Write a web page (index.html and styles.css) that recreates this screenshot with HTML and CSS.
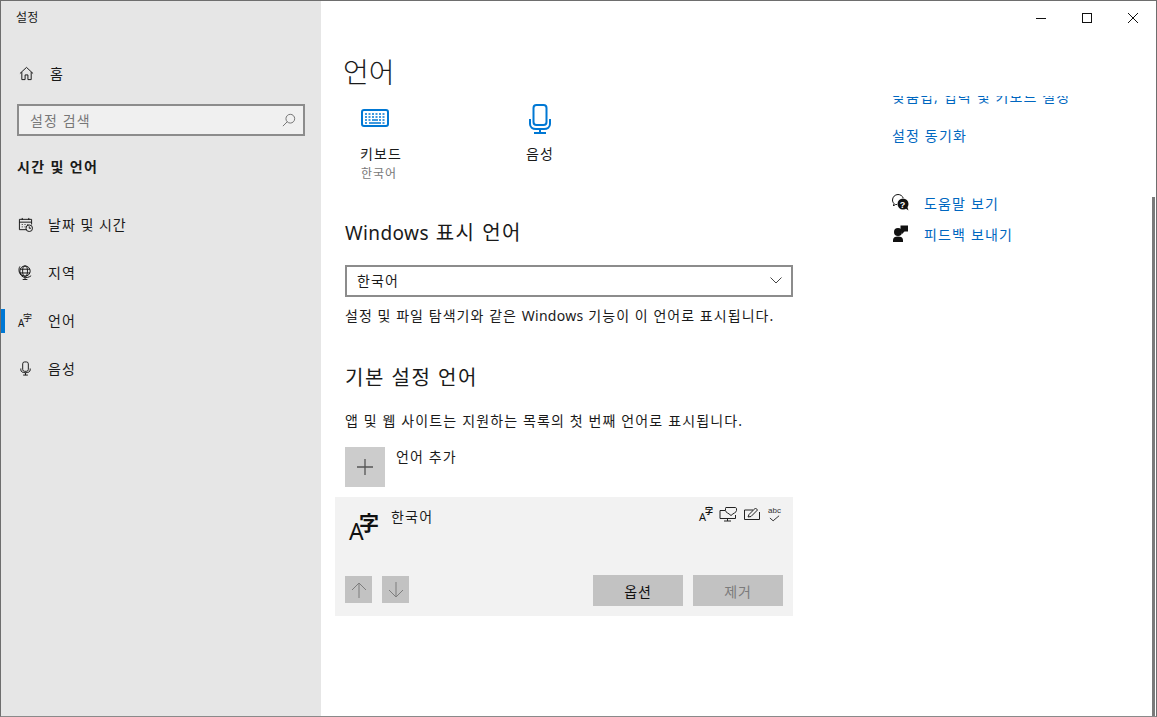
FILE: index.html
```html
<!DOCTYPE html>
<html lang="ko">
<head>
<meta charset="utf-8">
<title>설정</title>
<link rel="stylesheet" href="styles.css">
</head>
<body>
<div class="window">
  <aside class="sidebar">
    <div class="app-title">설정</div>
    <a class="home">
      <svg class="nav-icon" viewBox="0 0 16 16"><path d="M1 8 8 1.500 15 8M3 6.500V14.500H6.500V9.500H9.500V14.500H13V6.500"/></svg>
      <span>홈</span>
    </a>
    <div class="search"><span>설정 검색</span>
      <svg class="search-icon" viewBox="0 0 16 16"><circle cx="9.500" cy="6.500" r="5"/><path d="M6 10 1 15"/></svg>
    </div>
    <div class="section">시간 및 언어</div>
    <nav class="nav">
      <a class="nav-item">
        <svg class="nav-icon" viewBox="0 0 16 16"><path d="M9 13.500H1.500V2.500H14.500V8M1.500 5.500H14.500M4.500 1V3M11.500 1V3M4 8h1M7 8h1M10 8h1M4 10.500h1M7 10.500h1"/><circle cx="12" cy="12" r="3.500"/><path d="M12 10v2h2"/></svg>
        <span>날짜 및 시간</span>
      </a>
      <a class="nav-item">
        <svg class="nav-icon" viewBox="0 0 16 16"><circle cx="7.500" cy="6.500" r="5.500"/><ellipse cx="7.500" cy="6.500" rx="2.600" ry="5.500"/><path d="M2.200 4.500H12.800M2.200 8.500H12.800M2 1.500C0 5 1 10.500 6 13 9 14 12 13 14 11.500M7.500 13.500V15.500M5 15.500H10"/></svg>
        <span>지역</span>
      </a>
      <a class="nav-item active">
        <span class="lang-glyph lang-nav"><i class="g-a">A</i><i class="g-z">字</i></span>
        <span>언어</span>
      </a>
      <a class="nav-item">
        <svg class="nav-icon" viewBox="0 0 16 16"><rect x="5" y="1" width="6" height="10" rx="2"/><path d="M3 8V9.500C3 11.500 5 12.500 8 12.500S13 11.500 13 9.500V8M8 12.500V15M5.500 15H10.500"/></svg>
        <span>음성</span>
      </a>
    </nav>
  </aside>

  <main class="main">
    <header class="topbar">
      <svg class="win-btn" viewBox="0 0 46 32"><path d="M18 17.500H28"/></svg>
      <svg class="win-btn" viewBox="0 0 46 32"><rect x="18.500" y="12.500" width="9" height="9"/></svg>
      <svg class="win-btn" viewBox="0 0 46 32"><path d="M18 12 28 22M28 12 18 22"/></svg>
    </header>
    <h1 class="page-title">언어</h1>
    <div class="scroller">
      <div class="content">
        <div class="tiles">
          <div class="tile tile-kb">
            <svg class="kb" viewBox="0 0 28 18"><rect x="1" y="1" width="26" height="16" rx="2"/><path class="dots" d="M4 5h2M7.500 5h2M11 5h2M14.500 5h2M18 5h2M21.500 5h2M4 8h2M7.500 8h2M11 8h2M14.500 8h2M18 8h2M21.500 8h2M4 11h2M7.500 11h2M18 11h2M21.500 11h2M4 14h2M8 14h12M21.500 14h2M11 11h6"/></svg>
            <div class="tile-name">키보드</div>
            <div class="tile-sub">한국어</div>
          </div>
          <div class="tile tile-mic">
            <svg class="mic" viewBox="0 0 22 30"><rect x="4.500" y="1" width="13" height="20" rx="3"/><path d="M1 15V20C1 23 3.500 25 7 25H15C18.500 25 21 23 21 20V15M11 25V29M5 29H17"/></svg>
            <div class="tile-name">음성</div>
          </div>
        </div>

        <h2 class="heading first"><span class="latin">Windows</span> 표시 언어</h2>
        <div class="select"><span>한국어</span>
          <svg class="chev" viewBox="0 0 12 7"><path d="M.5.5 6 6 11.500.5"/></svg>
        </div>
        <p class="desc d1">설정 및 파일 탐색기와 같은 <span class="latin">Windows</span> 기능이 이 언어로 표시됩니다.</p>

        <h2 class="heading second">기본 설정 언어</h2>
        <p class="desc d2">앱 및 웹 사이트는 지원하는 목록의 첫 번째 언어로 표시됩니다.</p>
        <div class="add">
          <div class="plus"><svg viewBox="0 0 16 16"><path d="M8 0V16M0 8H16"/></svg></div>
          <span>언어 추가</span>
        </div>

        <div class="card">
          <div class="card-top">
            <span class="lang-glyph lang-big"><i class="g-a">A</i><i class="g-z">字</i></span>
            <span class="card-name">한국어</span>
            <div class="features">
              <span class="lang-glyph lang-small"><i class="g-a">A</i><i class="g-z">字</i></span>
              <svg class="feat" viewBox="0 0 18 15"><path d="M6 3.500H1V11.500H16.500V8M8.500 11.500V14M5 14H12"/><path d="M7 .5H16C17 .5 17.500 1 17.500 2V3.500C17.500 5.500 14.500 6 12 8.500 9.500 6 6.500 5.500 6.500 3.500V2C6.500 1 6.500 .5 7 .5Z"/></svg>
              <svg class="feat feat-pen" viewBox="0 0 16 14"><path d="M9 3H.5V12.500H15.500V5M4 10 5 7.500 11.500 1 13.500 3 7 9.500Z"/></svg>
              <span class="abc"><i>abc</i><svg viewBox="0 0 12 7"><path d="M1 3 4.500 6 11 .5"/></svg></span>
            </div>
          </div>
          <div class="card-bottom">
            <button class="arrow"><svg viewBox="0 0 16 16"><path d="M8 16V1M1 8 8 1 15 8"/></svg></button>
            <button class="arrow"><svg viewBox="0 0 16 16"><path d="M8 0V15M1 8 8 15 15 8"/></svg></button>
            <button class="btn options">옵션</button>
            <button class="btn remove">제거</button>
          </div>
        </div>
      </div>

      <aside class="links">
        <a class="link clipped">맞춤법, 입력 및 키보드 설정</a>
        <a class="link sync">설정 동기화</a>
        <a class="help">
          <svg class="help-icon" viewBox="0 0 17 17"><path class="line" d="M5 10.500C3.500 10.500 3 10.500 2.500 11L1.500 12 2 9.500C1 8.500.5 7.500.5 6 .5 3 3 .5 6 .5 8.500.5 10.500 2 11.200 4"/><circle cx="11" cy="10" r="5.500" class="solid"/><path class="solid" d="M13 14 16.500 16.500 15 12Z"/><text x="11" y="13.500" class="q">?</text></svg>
          <span>도움말 보기</span>
        </a>
        <a class="help">
          <svg class="help-icon" viewBox="0 0 17 17"><circle cx="6" cy="7" r="4" class="solid"/><path class="solid" d="M1 17V15C1 12.500 3 11.500 6 11.500S11 12.500 11 15V17Z"/><path class="solid" d="M8.500 .5H16V6.500H12.500L10 9V6.500H8.500Z"/></svg>
          <span>피드백 보내기</span>
        </a>
      </aside>
    </div>
    <div class="scrollbar"></div>
  </main>
</div>
</body>
</html>
```

FILE: styles.css
```css
* { box-sizing: border-box; }
html, body { margin: 0; height: 100%; overflow: hidden; }
body { font-family: "Noto Sans", "Noto Sans CJK KR", sans-serif; font-size: 14px; color: #1a1a1a; background: #fff; }
i { font-style: normal; }

.window { display: flex; width: 1157px; height: 717px; border: 1px solid #6e6e6e; border-bottom-color: #8a8a8a; overflow: hidden; }

/* Sidebar */
.sidebar { width: 320px; flex: none; background: #e6e6e6; padding-left: 16px; }
.app-title { font-size: 12px; line-height: 16px; margin-top: 9px; margin-left: -1px; letter-spacing: .3px; }
.home { display: flex; align-items: center; height: 24px; margin: 35px 0 0 2px; }
.home span { margin-left: 16px; }
.nav-icon { width: 15px; height: 15px; fill: none; stroke: #111; stroke-width: 1; flex: none; }
.search { display: flex; align-items: center; justify-content: space-between; width: 288px; height: 32px; margin: 19px 0 0 0; padding: 0 7px 0 11px; border: 2px solid #8c8c8c; background: #f0f0f0; color: #777; letter-spacing: 1.1px; }
.search-icon { width: 14px; height: 14px; fill: none; stroke: #666; stroke-width: 1; }
.section { font-weight: 700; font-size: 14px; line-height: 20px; margin-top: 21px; letter-spacing: 1.35px; }
.nav { margin: 24px 0 0 -16px; }
.nav-item { display: flex; align-items: center; height: 48px; padding: 0 0 2px 17px; letter-spacing: 1px; position: relative; }
.nav-item > span:last-child { margin-left: 15px; }
.nav-item > .lang-nav + span:last-child { margin-left: 14px; }
.nav-item.active::before { content: ""; position: absolute; left: 0; top: 12px; width: 4px; height: 24px; background: #0078d4; }

.lang-glyph { position: relative; display: block; flex: none; color: #111; }
.lang-glyph i { position: absolute; line-height: 1; font-family: "Noto Sans", sans-serif; }
.lang-glyph .g-z { font-family: "Noto Sans CJK SC", sans-serif; }
.lang-nav { width: 16px; height: 15px; }
.lang-nav .g-a { font-size: 10px; left: 0; bottom: 0; }
.lang-nav .g-z { font-size: 9px; right: 1px; top: 0; }
.lang-big { width: 30px; height: 30px; }
.lang-big .g-a { font-size: 23px; left: 0; bottom: 0; }
.lang-big .g-z { font-size: 20px; font-weight: 700; right: 0; top: 0; }
.lang-small { width: 14px; height: 15px; }
.lang-small .g-a { font-size: 11px; left: 0; bottom: 0; }
.lang-small .g-z { font-size: 8px; right: 0; top: 0; font-weight: 700; }

/* Main */
.main { flex: 1; min-width: 0; position: relative; }
.topbar { display: flex; justify-content: flex-end; height: 32px; }
.win-btn { width: 46px; height: 32px; fill: none; stroke: #111; stroke-width: 1; }
.page-title { margin: 0; height: 63px; padding: 18px 0 0 22px; font-size: 28px; line-height: 42px; font-weight: 300; }
.scroller { display: flex; height: 620px; overflow: hidden; }
.content { width: 472px; flex: none; padding-left: 14px; }

.tiles { display: flex; padding-left: 25px; margin-top: 8px; }
.tile { display: flex; flex-direction: column; letter-spacing: 1.1px; }
.tile-kb { width: 166px; }
.kb { width: 28px; height: 18px; margin: 5px 0 7px 1px; fill: none; stroke: #0078d4; stroke-width: 2; }
.kb .dots { stroke-width: 1.500; }
.mic { width: 22px; height: 30px; margin-left: 3px; fill: none; stroke: #0078d4; stroke-width: 2; }
.tile-name { line-height: 20px; margin-top: 10px; }
.tile-sub { font-size: 12px; line-height: 18px; color: #777; margin: 1px 0 0 1px; letter-spacing: 1px; }

.heading { margin: 0; font-size: 20px; line-height: 28px; font-weight: 400; padding-left: 10px; letter-spacing: 1.5px; }
.heading .latin { font-size: 19px; letter-spacing: .4px; }
.desc .latin { letter-spacing: .3px; }
.heading.first { margin-top: 36px; }
.heading.second { margin-top: 38px; }
.select { display: flex; align-items: center; justify-content: space-between; width: 448px; height: 32px; margin: 18px 0 0 10px; padding: 0 9px 2px 10px; border: 2px solid #8c8c8c; letter-spacing: 1.1px; }
.chev { width: 12px; height: 7px; fill: none; stroke: #444; stroke-width: 1; }
.desc { margin: 0; padding-left: 10px; line-height: 20px; font-size: 14px; letter-spacing: 1.05px; }
.d1 { margin-top: 9px; }
.d2 { margin-top: 19px; letter-spacing: 1.130px; }
.add { display: flex; align-items: flex-start; margin: 16px 0 0 10px; height: 40px; }
.plus { display: flex; align-items: center; justify-content: center; width: 40px; height: 40px; background: #ccc; }
.plus svg { width: 16px; height: 16px; fill: none; stroke: #555; stroke-width: 1.300; }
.add span { margin-left: 11px; line-height: 20px; letter-spacing: 1.1px; }

.card { width: 458px; height: 119px; margin-top: 10px; background: #f2f2f2; padding: 0 10px; }
.card-top { display: flex; height: 79px; }
.card-top .lang-big { margin: 16px 0 0 4px; }
.card-name { margin: 10px 0 0 12px; line-height: 20px; letter-spacing: 1.2px; }
.features { display: flex; gap: 6px; margin: 10px 1px 0 auto; height: 20px; }
.feat { width: 18px; height: 15px; fill: none; stroke: #222; stroke-width: 1; }
.feat-pen { width: 16px; height: 14px; margin-left: 1px; }
.abc { display: flex; flex-direction: column; align-items: center; width: 15px; margin: -1px 0 0 1px; }
.abc i { font-size: 8px; line-height: 9px; font-family: "Liberation Sans", sans-serif; color: #333; }
.abc svg { width: 11px; height: 7px; fill: none; stroke: #222; stroke-width: 1; }
.card-bottom { display: flex; align-items: flex-start; }
.arrow { width: 27px; height: 27px; margin: 0 10px 0 0; padding: 0; border: 0; background: #c2c2c2; display: flex; align-items: center; justify-content: center; }
.arrow svg { width: 16px; height: 16px; fill: none; stroke: #7d7d7d; stroke-width: 1; }
.btn { width: 90px; height: 31px; padding: 0; border: 0; background: #c2c2c2; font: inherit; letter-spacing: .8px; }
.options { margin-left: auto; color: #111; margin-top: -1px; }
.remove { margin-left: 10px; color: #7b7b7b; margin-top: -1px; }

/* Right column */
.links { padding-left: 99px; display: flex; flex-direction: column; align-items: flex-start; }
.links a { color: #0067c0; letter-spacing: 1.150px; }
.link { display: block; line-height: 20px; }
.clipped { margin-top: -9px; }
.sync { margin-top: 19px; }
.help { display: flex; align-items: center; height: 31px; }
.links .sync + .help { margin-top: 41px; }
.help span { margin-left: 15px; }
.help-icon { width: 17px; height: 17px; flex: none; fill: none; stroke: #111; stroke-width: 1; }
.help-icon .solid { fill: #111; stroke: none; }
.help-icon .q { fill: #fff; stroke: none; font: 700 9px "Liberation Sans", sans-serif; text-anchor: middle; }

.scrollbar { position: absolute; right: 1px; top: 196px; bottom: 0; width: 3px; background: #7a7a7a; }
```
